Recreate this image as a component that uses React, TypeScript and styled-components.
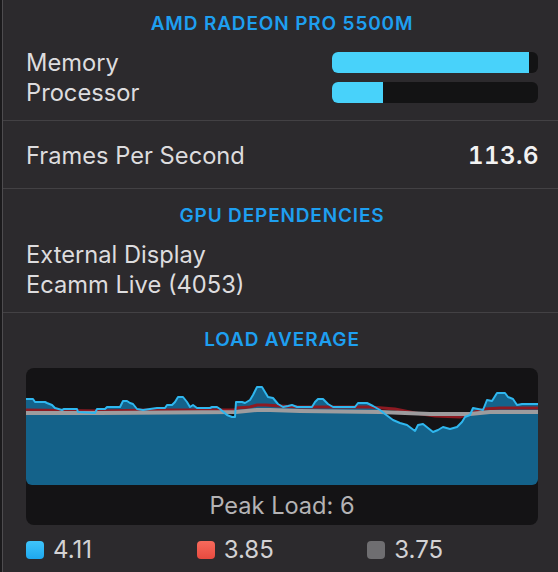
import styled, { createGlobalStyle } from "styled-components";

const GlobalStyle = createGlobalStyle`
    html, body {
        margin: 0;
        padding: 0;
        background: #1b1a1c;
    }
    body {
        font-family: Inter, "Noto Sans", "Liberation Sans", sans-serif;
        -webkit-font-smoothing: antialiased;
    }
`;

const Panel = styled.main`
    margin-left: 2px;
    border-left: 1px solid #4e4c4f;
    background: #2c2a2d;
    height: 572px;
    display: flex;
    flex-direction: column;
    overflow: hidden;
`;

const Section = styled.section<{ $top: number; $bottom: number; $last?: boolean }>`
    padding: ${(p) => p.$top}px 20px ${(p) => p.$bottom}px 23px;
    border-bottom: ${(p) => (p.$last ? "none" : "1px solid #434144")};
    display: flex;
    flex-direction: column;
`;

const Title = styled.h2<{ $gap: number }>`
    margin: 0 0 ${(p) => p.$gap}px;
    font-size: 19px;
    line-height: 24px;
    font-weight: 600;
    letter-spacing: 0.85px;
    text-align: center;
    color: #1e9ff0;
`;

const Row = styled.div`
    display: flex;
    align-items: center;
    justify-content: space-between;
    height: 30px;
`;

const Label = styled.span`
    font-size: 23.7px;
    color: #dddcde;
`;

const Value = styled.span`
    font-size: 24px;
    font-weight: 600;
    font-variant-numeric: tabular-nums;
    letter-spacing: 0.5px;
    margin-right: -1px;
    color: #f2f2f2;
`;

const Bar = styled.div`
    width: 206px;
    height: 21px;
    border-radius: 6px;
    background: #131314;
    overflow: hidden;
`;

const BarFill = styled.div`
    height: 100%;
    background: #48d2fa;
`;

const ChartBox = styled.div`
    height: 157px;
    border-radius: 8px;
    background: #141315;
    display: flex;
    flex-direction: column;
    overflow: hidden;
`;

const Plot = styled.div`
    height: 117px;
    border-radius: 6px;
    overflow: hidden;

    svg {
        display: block;
    }
`;

const ChartFooter = styled.div`
    flex: 1;
    display: flex;
    align-items: center;
    justify-content: center;
    font-size: 23.6px;
    color: #b4b3b5;
`;

const Legend = styled.div`
    margin-top: 10px;
    display: grid;
    grid-template-columns: repeat(3, 1fr);
    height: 26px;
`;

const LegendItem = styled.div`
    display: flex;
    align-items: center;
    gap: 9px;
    font-size: 24px;
    color: #d3d2d4;
`;

const Swatch = styled.span<{ $color: string }>`
    width: 18px;
    height: 18px;
    border-radius: 4px;
    background: ${(p) => p.$color};
`;

const blue: [number, number][] = [
	[26, 399], [33, 399], [35, 402], [45, 402], [47, 403], [52, 405], [55, 408], [62, 410],
	[64, 409], [77, 409], [78, 412], [95, 413], [97, 409], [105, 409], [107, 407], [120, 407],
	[123, 401], [127, 401], [130, 403], [133, 404], [137, 409], [143, 410], [150, 409], [157, 408],
	[165, 408], [167, 405], [172, 405], [175, 402], [178, 397], [183, 397], [187, 402], [190, 407],
	[193, 405], [197, 408], [210, 408], [212, 407], [217, 407], [220, 409], [227, 415], [232, 417],
	[235, 417], [236, 402], [242, 402], [245, 403], [250, 400], [253, 395], [257, 387], [262, 387],
	[265, 392], [268, 397], [273, 398], [278, 404], [283, 407], [288, 406], [292, 405], [297, 407],
	[312, 407], [315, 402], [318, 399], [323, 399], [328, 404], [333, 407], [355, 407], [358, 403],
	[367, 403], [373, 406], [380, 410], [385, 414], [393, 420], [400, 423], [407, 425], [411, 428],
	[415, 431], [418, 425], [423, 424], [428, 428], [433, 432], [438, 430], [443, 427], [450, 429],
	[457, 427], [462, 422], [465, 417], [470, 415], [473, 408], [478, 409], [483, 410], [487, 400],
	[492, 401], [497, 393], [505, 393], [508, 397], [513, 399], [517, 405], [522, 404], [538, 404],
];

const red: [number, number][] = [
	[26, 410], [100, 411], [150, 410], [235, 410], [237, 408], [250, 407], [257, 405], [266, 405],
	[280, 406], [300, 407], [370, 407], [395, 409], [415, 413], [435, 416], [460, 417], [475, 412],
	[485, 409], [500, 408], [538, 408],
];

const gray: [number, number][] = [
	[26, 413], [100, 413], [236, 412], [257, 410], [270, 410], [300, 411], [380, 412], [430, 414],
	[470, 414], [490, 412], [538, 412],
];

const pts = (list: [number, number][]) => list.map(([x, y]) => `${x},${y}`).join(" ");

function LoadChart() {
	return (
		<svg width="512" height="117" viewBox="26 368 512 117" preserveAspectRatio="none">
			<polygon points={`${pts(blue)} 538,485 26,485`} fill="#14628a" />
			<polyline points={pts(red)} fill="none" stroke="#8d1a22" strokeWidth="3" />
			<polyline points={pts(gray)} fill="none" stroke="#9d9c9e" strokeWidth="4" />
			<polyline points={pts(blue)} fill="none" stroke="#2fb7ef" strokeWidth="2" strokeLinejoin="round" />
		</svg>
	);
}

const usage = [
	{ name: "Memory", pct: 95.6 },
	{ name: "Processor", pct: 24.8 },
];

const legend = [
	{ color: "linear-gradient(#3fc4fa, #1ea8ef)", value: "4.11" },
	{ color: "linear-gradient(#f76a5c, #e84a3f)", value: "3.85" },
	{ color: "#6f6e71", value: "3.75" },
];

export default function App() {
	return (
		<>
			<GlobalStyle />
			<Panel>
				<Section $top={12} $bottom={13}>
					<Title $gap={11}>AMD RADEON PRO 5500M</Title>
					{usage.map((u) => (
						<Row key={u.name}>
							<Label>{u.name}</Label>
							<Bar>
								<BarFill style={{ width: `${u.pct}%` }} />
							</Bar>
						</Row>
					))}
				</Section>
				<Section $top={19} $bottom={18}>
					<Row>
						<Label>Frames Per Second</Label>
						<Value>113.6</Value>
					</Row>
				</Section>
				<Section $top={15} $bottom={13}>
					<Title $gap={11}>GPU DEPENDENCIES</Title>
					<Row>
						<Label>External Display</Label>
					</Row>
					<Row>
						<Label>Ecamm Live (4053)</Label>
					</Row>
				</Section>
				<Section $top={15} $bottom={0} $last>
					<Title $gap={16}>LOAD AVERAGE</Title>
					<ChartBox>
						<Plot>
							<LoadChart />
						</Plot>
						<ChartFooter>Peak Load: 6</ChartFooter>
					</ChartBox>
					<Legend>
						{legend.map((l) => (
							<LegendItem key={l.value}>
								<Swatch $color={l.color} />
								{l.value}
							</LegendItem>
						))}
					</Legend>
				</Section>
			</Panel>
		</>
	);
}
